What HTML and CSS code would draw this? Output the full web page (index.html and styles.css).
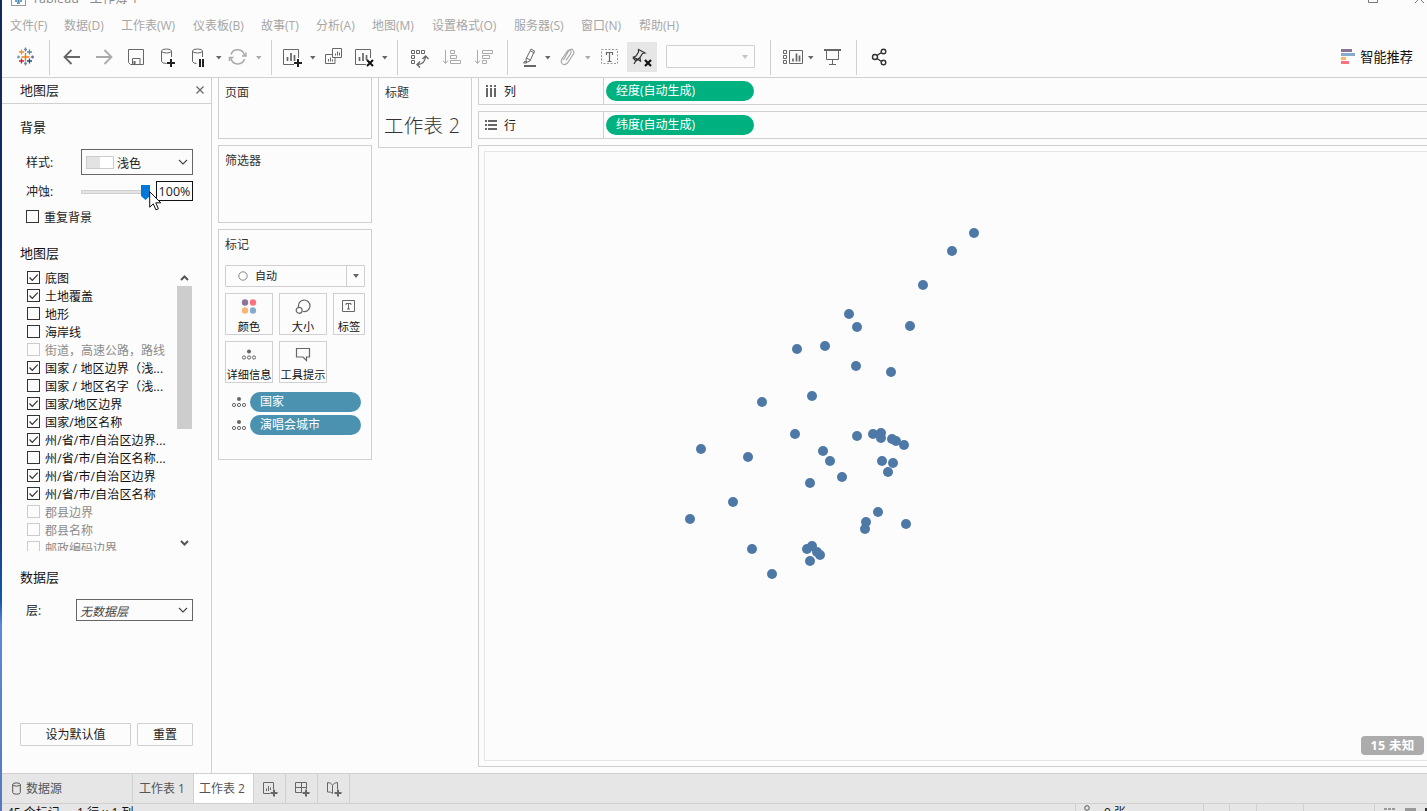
FILE: index.html
```html
<!DOCTYPE html>
<html lang="zh-CN">
<head>
<meta charset="utf-8">
<title>Tableau - 工作簿 1</title>
<link rel="stylesheet" href="styles.css">
</head>
<body>
<svg class="defs" width="0" height="0">
  <defs>
    <symbol id="tick" viewBox="0 0 13 13"><path d="M2.5 6.5l2.8 2.8 5.4-5.6" fill="none" stroke="#333" stroke-width="1.2"/></symbol>
    <symbol id="detail" viewBox="0 0 14 12"><g fill="none" stroke="#666"><circle cx="2" cy="9" r="1.6"/><circle cx="7" cy="9" r="1.6"/><circle cx="12" cy="9" r="1.6"/></g><circle cx="7" cy="3" r="2" fill="#666"/></symbol>
    <symbol id="chev" viewBox="0 0 10 6"><path d="M1 1l4 4 4-4" fill="none" stroke="#444" stroke-width="1.1"/></symbol>
  </defs>
</svg>
<div class="window">
  <header class="titlebar">
    <svg class="app-icon" width="16" height="16"><rect x=".5" y=".5" width="14" height="14" fill="#fff" stroke="#999"/><path d="M7.5 3v9M3 7.500h9" stroke="#3f7fae" stroke-width="2" stroke-dasharray="2 1"/><path d="M4 10h2M9 10h2M6 12h3" stroke="#3f7fae" stroke-width="1.500"/></svg>
    <span class="title">Tableau - 工作簿 1</span>
    <svg class="controls" width="60" height="16"><path d="M1.500 3.500v9h9v-9zM48 4l9 9M57 4l-9 9" fill="none" stroke="#777"/></svg>
  </header>
  <nav class="menu">
    <span>文件(F)</span><span>数据(D)</span><span>工作表(W)</span><span>仪表板(B)</span><span>故事(T)</span><span>分析(A)</span><span>地图(M)</span><span>设置格式(O)</span><span>服务器(S)</span><span>窗口(N)</span><span>帮助(H)</span>
  </nav>
  <div class="toolbar">
    <svg width="47" height="39" viewBox="2 38 47 39"><g fill="none" stroke-width="1.3"><path d="M25.500 53v8M21.500 57h8" stroke="#ee7c1e" stroke-width="1.5"/><path d="M21.500 49.500v5M19 52h5" stroke="#ee8f2d"/><path d="M29.500 49.500v5M27 52h5" stroke="#5b879b"/><path d="M21.500 58.500v5M19 61h5" stroke="#c72037"/><path d="M29.500 58.500v5M27 61h5" stroke="#1f4e86"/><path d="M25.500 47.500v4M24 49.500h3M25.500 61.500v4M24 63.500h3" stroke="#7489a8"/><path d="M18.500 55.500v3M17 57h3" stroke="#6cabb3"/><path d="M32.500 55.500v3M31 57h3" stroke="#75689b"/></g></svg>
    <i class="sep"></i>
    <svg width="68" height="39" viewBox="50 38 68 39" fill="none" stroke-width="1.800"><path d="M80 57H65M71.500 50l-7 7 7 7" stroke="#666"/><path d="M96 57h15M104.500 50l7 7-7 7" stroke="#aaa"/></svg>
    <svg width="34" height="39" viewBox="118 38 34 39" fill="none" stroke="#666"><path d="M128.500 49.500h15v15h-13l-2-2zM132.500 64v-5.500h7.500V64" /><path d="M134.500 61v3" stroke-width="2"/></svg>
    <svg width="73" height="39" viewBox="152 38 73 39" fill="none" stroke="#666"><ellipse cx="166.500" cy="51" rx="5" ry="2"/><path d="M161.500 51v10.500q1 2 5 2M171.500 51v6"/><path d="M171 59v8M167 63h8" stroke="#222" stroke-width="2"/><ellipse cx="197.500" cy="51" rx="5" ry="2"/><path d="M192.500 51v10.500q1 2 4 2M202.500 51v6"/><path d="M200 59v8M203 59v8" stroke="#222" stroke-width="2"/><path d="M216 56h5.500l-2.700 3.500z" fill="#666" stroke="none"/></svg>
    <svg width="46" height="39" viewBox="225 38 46 39" fill="none" stroke="#aaa" stroke-width="1.500"><path d="M231 54.500a7 7 0 0 1 13.500 1M244.500 59a7 7 0 0 1-13.500-.5M229.500 61v-3.500h4M246 52.500v3.500h-4"/><path d="M256 56h5.500l-2.700 3.500z" fill="#aaa" stroke="none"/></svg>
    <i class="sep"></i>
    <svg width="125" height="39" viewBox="272 38 125 39" fill="none" stroke="#666"><path d="M294 64.500h-10.500v-15h15V58"/><path d="M287.500 61v-4M291 61v-8M294.500 61v-6" stroke-width="1.700"/><path d="M298 59v8M294 63h8" stroke="#222" stroke-width="2"/><path d="M310 56h5.500l-2.700 3.500z" fill="#666" stroke="none"/><path d="M332.500 48.500h9v9h-9zM332 54.500h-6.500v9h9.500V58M328.500 61.500v-2.500M330.500 61.500v-4M332.500 61.500v-2M335.500 55.500v-2M337.500 55.500v-4M339.500 55.500v-3"/><path d="M366 64.500h-10.500v-15h15V58"/><path d="M359.500 61v-4M363 61v-8M366.500 60v-5" stroke-width="1.700"/><path d="M367 60l6 6M373 60l-6 6" stroke="#111" stroke-width="2"/><path d="M382 56h5.500l-2.700 3.500z" fill="#666" stroke="none"/></svg>
    <i class="sep"></i>
    <svg width="109" height="39" viewBox="398 38 109 39" fill="none" stroke="#666"><path d="M411.500 50.500h3v3h-3zM416.500 50.500h3v3h-3zM421.500 50.500h3v3h-3zM411.500 55.500h3v3h-3zM411.500 60.500h3v3h-3z"/><path d="M417 64.500q8 0 8.500-8M422.500 59l3-3 3 3M420 61.500l-3 3 3 3" stroke-width="1.300"/><g stroke="#aaa"><path d="M445.500 50v13M443 60.500l2.500 3 2.500-3M450.500 50.500h4v3h-4zM450.500 55.500h6v3h-6zM450.500 60.500h10v3h-10z"/><path d="M477.500 50v13M475 60.500l2.500 3 2.500-3M482.500 50.500h10v3h-10zM482.500 55.500h7v3h-7zM482.500 60.500h4v3h-4z"/></g></svg>
    <i class="sep"></i>
    <svg width="119" height="39" viewBox="508 38 119 39" fill="none" stroke="#666"><path d="M531 49l3.500 2-4.500 10-3.500 1.500-.5-3.500zM526.500 58l3.500 2M530.500 51l4 2M525 61l-1.500 2h3z"/><path d="M524 66h12" stroke-width="2"/><path d="M545 56h5.500l-2.700 3.500z" fill="#666" stroke="none"/><path d="M563.500 60l4.500-8q3-4.500 5-2t-.5 5.500l-5 7.500q-3.500 3-5.500.5t1-6l4.500-6.500q2-2 3.200-.7t-.2 3.500l-4.500 6.500" stroke="#aaa" stroke-width="1.200"/><path d="M585 56h5.500l-2.700 3.500z" fill="#aaa" stroke="none"/><rect x="601.500" y="49.500" width="16" height="14" stroke="#999" stroke-dasharray="2 1.500"/><path d="M606.500 55v-2.500h6V55M609.500 52.500v8.500M607.500 61.500h4" stroke-width="1.200"/></svg>
    <span class="active"><svg width="30" height="30" viewBox="627 42 30 30" fill="none" stroke="#333" stroke-width="1.200"><path d="M638.500 49.500l6.500 3.500-2.500.5-2.500 4 .5 3.500-7-4 2.500-1 2.500-4zM640 57.500l-4 3.500-3-3M636.500 59.500l-2.500 4.500"/><path d="M645 60l6 6M651 60l-6 6" stroke="#111" stroke-width="2.200"/></svg></span>
    <span class="combo"><i class="caret"></i></span>
    <i class="sep"></i>
    <svg width="85" height="39" viewBox="771 38 85 39" fill="none" stroke="#666"><path d="M783.500 50.500h3v3h-3zM783.500 55.500h3v3h-3zM783.500 60.500h3v3h-3zM789.500 50.500h13v13h-13z"/><path d="M793 61.500v-3M796.500 61.500v-8M799.500 61.500v-6" stroke-width="1.700"/><path d="M808 56h5.500l-2.700 3.500z" fill="#666" stroke="none"/><path d="M824 50h17" stroke-width="2"/><path d="M826.500 51v8.500h12V51M832.500 60v4M829 64.500h7"/></svg>
    <i class="sep"></i>
    <svg width="40" height="39" viewBox="857 38 40 39" fill="none" stroke="#333" stroke-width="1.400"><circle cx="875" cy="57" r="2.500"/><circle cx="883.500" cy="51.500" r="2.300"/><circle cx="883.500" cy="62.500" r="2.300"/><path d="M877 55.500l4.500-3M877 58.500l4.500 3"/></svg>
    <div class="showme"><svg width="14" height="16"><path fill="#8b7399" d="M0 0h11v3H0z"/><path fill="#87abcf" d="M0 4h14v3H0z"/><path fill="#fbb55d" d="M0 8h5v3H0z"/><path fill="#fb717d" d="M0 12h8v3H0z"/></svg><span>智能推荐</span></div>
  </div>

  <main class="workspace">
    <aside class="layers">
      <div class="layers-head"><span>地图层</span><svg width="8" height="8"><path d="M.5.5l7 7M7.500.5l-7 7" stroke="#666" stroke-width="1.200"/></svg></div>
      <h3 class="bg-title">背景</h3>
      <div class="field style-field"><label>样式:</label><div class="select"><i class="swatch"></i><span>浅色</span><svg width="10" height="6"><use href="#chev"/></svg></div></div>
      <div class="field wash-field"><label>冲蚀:</label><div class="slider"><i class="track"></i><svg class="thumb" width="9" height="15"><path d="M0 0h9v11l-4.500 4L0 11z" fill="#0078d7"/></svg></div><output>100%</output>
        <svg class="cursor" width="13" height="20"><path d="M.7.7v15.500l3.600-3.400 2.600 6 2.500-1-2.600-6H11.800z" fill="#fff" stroke="#111"/></svg></div>
      <div class="repeat"><i class="box"></i><span>重复背景</span></div>
      <h3 class="list-title">地图层</h3>
      <div class="layer-list">
        <ul>
          <li><i class="box"><svg><use href="#tick"/></svg></i>底图</li>
          <li><i class="box"><svg><use href="#tick"/></svg></i>土地覆盖</li>
          <li><i class="box"></i>地形</li>
          <li><i class="box"></i>海岸线</li>
          <li class="off"><i class="box"></i>街道，高速公路，路线</li>
          <li class="spaced"><i class="box"><svg><use href="#tick"/></svg></i>国家 / 地区边界（浅...</li>
          <li class="spaced"><i class="box"></i>国家 / 地区名字（浅...</li>
          <li class="spaced"><i class="box"><svg><use href="#tick"/></svg></i>国家/地区边界</li>
          <li class="spaced"><i class="box"><svg><use href="#tick"/></svg></i>国家/地区名称</li>
          <li class="spaced"><i class="box"><svg><use href="#tick"/></svg></i>州/省/市/自治区边界...</li>
          <li class="spaced"><i class="box"></i>州/省/市/自治区名称...</li>
          <li class="spaced"><i class="box"><svg><use href="#tick"/></svg></i>州/省/市/自治区边界</li>
          <li class="spaced"><i class="box"><svg><use href="#tick"/></svg></i>州/省/市/自治区名称</li>
          <li class="off"><i class="box"></i>郡县边界</li>
          <li class="off"><i class="box"></i>郡县名称</li>
          <li class="off"><i class="box"></i>邮政编码边界</li>
        </ul>
        <div class="scrollbar">
          <svg width="15" height="17"><path d="M4 11l3.500-3.500L11 11" fill="none" stroke="#555" stroke-width="2"/></svg>
          <i class="scroll-thumb"></i>
          <svg class="down" width="15" height="17"><path d="M4 7l3.500 3.500L11 7" fill="none" stroke="#555" stroke-width="2"/></svg>
        </div>
      </div>
      <h3 class="data-title">数据层</h3>
      <div class="field data-field"><label>层:</label><div class="select"><em>无数据层</em><svg width="10" height="6"><use href="#chev"/></svg></div></div>
      <div class="buttons"><button class="wide">设为默认值</button><button>重置</button></div>
    </aside>

    <section class="cards">
      <div class="card pages">页面</div>
      <div class="card filters">筛选器</div>
      <div class="card marks">
        <div>标记</div>
        <div class="mark-type"><svg width="10" height="10"><circle cx="5" cy="5" r="4.200" fill="none" stroke="#888"/></svg><span>自动</span><b><i class="caret"></i></b></div>
        <div class="mark-grid">
          <div><svg width="16" height="18"><circle cx="4" cy="3.500" r="3.200" fill="#8b7399"/><circle cx="12" cy="3.500" r="3.200" fill="#fb717d"/><circle cx="4" cy="11.500" r="3.200" fill="#fbb577"/><circle cx="12" cy="11.500" r="3.200" fill="#87abcf"/></svg>颜色</div>
          <div><svg width="16" height="18" fill="none" stroke="#666" stroke-width="1.200"><path d="M3.500 8a5.800 5.800 0 1 1 4.500 4.500"/><circle cx="4.200" cy="11.300" r="3"/></svg>大小</div>
          <div><svg width="16" height="18" fill="none" stroke="#666"><path d="M1.500 1.500h12v11h-12zM5 6V4.500h5V6M7.500 4.500V10M6 10h3"/></svg>标签</div>
          <div><svg width="16" height="18"><use href="#detail" x="1" y="1.500" width="14" height="12"/></svg>详细信息</div>
          <div><svg width="16" height="18" fill="none" stroke="#666" stroke-width="1.200"><path d="M1.500 1.500h13v8.500h-3v3.500L8 10H1.500z"/></svg>工具提示</div>
        </div>
        <div class="mark-pill"><svg width="14" height="12"><use href="#detail"/></svg><span>国家</span></div>
        <div class="mark-pill"><svg width="14" height="12"><use href="#detail"/></svg><span>演唱会城市</span></div>
      </div>
    </section>

    <section class="title-card"><div>标题</div><h1>工作表 2</h1></section>

    <section class="sheet">
      <div class="shelf"><div class="shelf-label"><svg width="12" height="12" fill="#666"><path d="M1 0h2v2H1zM5 0h2v2H5zM9 0h2v2H9zM1 3h2v9H1zM5 3h2v9H5zM9 3h2v9H9z"/></svg><span>列</span></div><span class="pill">经度(自动生成)</span></div>
      <div class="shelf"><div class="shelf-label"><svg width="12" height="12" fill="#666"><path d="M0 1h2v2H0zM0 5h2v2H0zM0 9h2v2H0zM3 1h9v2H3zM3 5h9v2H3zM3 9h9v2H3z"/></svg><span>行</span></div><span class="pill">纬度(自动生成)</span></div>
      <div class="view"><div class="map">
        <svg width="942" height="608" viewBox="485 152 942 608" fill="#4e79a7"><circle cx="974" cy="233" r="5"/><circle cx="952" cy="251" r="5"/><circle cx="923" cy="285" r="5"/><circle cx="849" cy="314" r="5"/><circle cx="857" cy="327" r="5"/><circle cx="910" cy="326" r="5"/><circle cx="797" cy="349" r="5"/><circle cx="825" cy="346" r="5"/><circle cx="856" cy="366" r="5"/><circle cx="891" cy="372" r="5"/><circle cx="812" cy="396" r="5"/><circle cx="762" cy="402" r="5"/><circle cx="795" cy="434" r="5"/><circle cx="857" cy="436" r="5"/><circle cx="873" cy="434" r="5"/><circle cx="881" cy="433" r="5"/><circle cx="881" cy="438" r="5"/><circle cx="892" cy="439" r="5"/><circle cx="896" cy="441" r="5"/><circle cx="904" cy="445" r="5"/><circle cx="701" cy="449" r="5"/><circle cx="748" cy="457" r="5"/><circle cx="823" cy="451" r="5"/><circle cx="830" cy="461" r="5"/><circle cx="882" cy="461" r="5"/><circle cx="893" cy="463" r="5"/><circle cx="888" cy="472" r="5"/><circle cx="842" cy="477" r="5"/><circle cx="810" cy="483" r="5"/><circle cx="733" cy="502" r="5"/><circle cx="690" cy="519" r="5"/><circle cx="878" cy="512" r="5"/><circle cx="866" cy="522" r="5"/><circle cx="865" cy="529" r="5"/><circle cx="906" cy="524" r="5"/><circle cx="752" cy="549" r="5"/><circle cx="807" cy="549" r="5"/><circle cx="812" cy="546" r="5"/><circle cx="817" cy="552" r="5"/><circle cx="820" cy="555" r="5"/><circle cx="810" cy="561" r="5"/><circle cx="772" cy="574" r="5"/></svg>
        <span class="unknown">15 未知</span>
      </div></div>
    </section>
  </main>

  <footer class="tabs">
    <div class="source"><svg width="9" height="13" fill="none" stroke="#555"><ellipse cx="4.500" cy="2.500" rx="3.800" ry="1.600"/><path d="M.7 2.500v8q0 1.700 3.800 1.700t3.800-1.700v-8"/></svg>数据源</div>
    <div class="tab">工作表 1</div>
    <div class="tab current">工作表 2</div>
    <div class="new"><svg width="18" height="18" fill="none" stroke="#666"><path d="M9 12.500H2.500v-11h10V8M5.500 10V7.500M7.500 10V5M9.500 9V6.500"/><path d="M13 8.500v7M9.500 12h7" stroke-width="2"/></svg></div>
    <div class="new"><svg width="18" height="18" fill="none" stroke="#666"><path d="M9 11.500H2.500v-10h11V8M2.500 6.500h11M8.500 1.500v10"/><path d="M13 8.500v7M9.500 12h7" stroke-width="2"/></svg></div>
    <div class="new"><svg width="18" height="18" fill="none" stroke="#666"><path d="M8 12.500q-2-2-5.500-1.500v-9.500Q6 1.500 7.500 4q2-2.500 5-2.500V8M7.500 4v8.500"/><path d="M13 8.500v7M9.500 12h7" stroke-width="2"/></svg></div>
  </footer>
  <div class="status">
    <span class="marks-count">45 个标记</span><span class="rows-count">1 行 x 1 列</span>
    <div class="status-right">
      <div class="user"><svg width="8" height="12" fill="none" stroke="#555"><circle cx="4" cy="4" r="2.300"/><path d="M1 12V9q3-3 6 0v3"/></svg><span>0 张</span></div>
      <div></div><div></div><div></div><div></div>
      <div class="modes"><svg width="52" height="8"><path d="M9 4h3v2H9zM13 4h3v2h-3zM17 4h3v2h-3zM30 4h11v4H30z" fill="#999"/><path d="M50 4h2v4h-2z" fill="#333"/></svg></div>
    </div>
  </div>
</div>
</body>
</html>
```
FILE: styles.css
```css
* { box-sizing: border-box; }
body {
  margin: 0;
  width: 1427px;
  height: 811px;
  overflow: hidden;
  background: #fcfcfc;
  color: #222;
  font: 12px/18px "Open Sans", "Noto Sans CJK SC", sans-serif;
}
svg { display: block; flex: none; }
.defs { position: absolute; }
i { font-style: normal; }
ul { list-style: none; margin: 0; padding: 0; }
h1, h3 { margin: 0; font-weight: 400; }
.window {
  display: flex;
  flex-direction: column;
  height: 811px;
  border-style: solid;
  border-image: linear-gradient(#12275f 0, #12306f 60%, #1757a8 74%, #5a8bd6 77%, #5578bd 100%) 1;
  border-width: 0 0 0 2px;
}

/* title, menu and toolbar */
.titlebar { display: flex; height: 14px; padding-left: 9px; flex: none; }
.app-icon { margin-top: -9px; }
.title { margin: -10px 0 0 5px; font-size: 12.5px; line-height: 18px; color: #8a8a8a; white-space: pre; letter-spacing: .1px; }
.controls { margin: -10px 0 0 auto; width: 60px; }
.menu {
  display: grid;
  grid-template-columns: 54px 57px 72px 68px 55px 56px 60px 82px 67px 58px auto;
  height: 24px;
  padding-left: 8px;
  line-height: 24px;
  color: #a6a6a6;
  white-space: nowrap;
  flex: none;
}
.toolbar { display: flex; height: 39px; flex: none; }
.sep { width: 1px; height: 35px; margin-top: 2px; background: #d0d0d0; flex: none; }
.active { height: 30px; margin-top: 4px; background: #e6e6e6; }
.combo {
  display: flex; align-items: center; justify-content: flex-end;
  width: 89px; height: 23px; margin: 7px 15px 0 9px; padding-right: 6px;
  border: 1px solid #d0d0d0; border-radius: 1px;
}
.caret { border: 3.5px solid transparent; border-top: 4px solid #666; border-bottom: 0; }
.combo .caret { border-top-color: #c4c4c4; }
.showme { display: flex; gap: 5px; margin: 11px 14px 0 auto; font-size: 13.2px; line-height: 17px; color: #111; }

/* workspace columns */
.workspace { display: flex; height: 696px; border-top: 1px solid #d0d0d0; flex: none; }
.layers { width: 210px; border-right: 1px solid #d0d0d0; flex: none; }
.layers h3 { height: 24px; padding-left: 18px; font-size: 13px; line-height: 23px; color: #111; }
.layers-head {
  display: flex; justify-content: space-between;
  height: 26px; padding: 0 7px 0 18px;
  border-bottom: 1px solid #d0d0d0;
  font-size: 13px; line-height: 24px;
}
.layers-head svg { margin-top: 8px; }
.layers .bg-title { margin-top: 12px; }
.field { display: flex; padding: 0 18px 0 24px; position: relative; }
.field label { width: 55px; }
.select { display: flex; align-items: center; flex: 1; padding: 0 4px; border: 1px solid #666; }
.select svg { margin-left: auto; }
.select span, .select em { padding-top: 2px; }
.style-field { height: 26px; margin-top: 9px; line-height: 27px; }
.swatch { width: 28px; height: 13px; margin-right: 3px; border: 1px solid #ccc; background: linear-gradient(90deg, #e3e3e3 50%, #fff 50%); }
.wash-field { height: 20px; margin-top: 6px; line-height: 22px; }
.slider { display: flex; align-items: center; width: 75px; }
.track { width: 60px; height: 4px; background: #e3e3e3; border: 1px solid #d0d0d0; border-right: 0; margin-top: 2px; }
.thumb { margin-top: 3px; }
output { width: 37px; border: 1px solid #111; font-size: 12.5px; line-height: 19px; text-align: center; color: #222; white-space: nowrap; }
.cursor { position: absolute; left: 147px; top: 10px; }
.repeat { display: flex; gap: 5px; height: 18px; margin-top: 7px; padding-left: 24px; line-height: 20px; }
.box { width: 13px; height: 13px; border: 1px solid #333; flex: none; margin-top: 2px; }
.box svg { width: 13px; height: 13px; margin: -1px; }
.layers .list-title { margin-top: 16px; }
.layer-list { display: flex; justify-content: space-between; height: 282px; margin-top: 3px; padding: 0 19px 0 25px; overflow: hidden; }
.layer-list li { display: flex; gap: 5px; height: 18px; line-height: 20px; white-space: nowrap; color: #111; }
.layer-list .spaced { letter-spacing: .15px; }
.layer-list .off { color: #8c8c8c; }
.off .box { border-color: #ccc; }
.scrollbar { display: flex; flex-direction: column; width: 15px; }
.scroll-thumb { height: 143px; background: #cdcdcd; }
.scrollbar .down { margin-top: auto; }
.layers .data-title { margin-top: 15px; }
.data-field { height: 22px; margin-top: 9px; line-height: 23px; }
.data-field label { width: 50px; }
.data-field .select { padding-left: 3px; }
.data-field em { color: #444; }
.buttons { display: flex; gap: 6px; margin-top: 102px; padding-left: 18px; }
button { width: 56px; height: 23px; padding: 0; border: 1px solid #d0d0d0; border-radius: 1px; background: none; color: #222; font: inherit; line-height: 20px; }
.wide { width: 111px; }

.cards { display: flex; flex-direction: column; gap: 6px; width: 154px; margin: -1px 0 0 6px; flex: none; }
.card, .title-card { border: 1px solid #d0d0d0; padding: 6px 6px 0; color: #333; }
.pages { height: 62px; }
.filters { height: 78px; }
.marks { height: 231px; }
.mark-type { display: flex; align-items: center; height: 22px; margin-top: 11px; padding-left: 12px; border: 1px solid #d0d0d0; border-radius: 1px; font-size: 11px; color: #222; }
.mark-type span { margin-left: 7px; }
.mark-type b { display: flex; align-items: center; justify-content: center; width: 18px; height: 20px; margin-left: auto; border-left: 1px solid #d0d0d0; }
.mark-grid { display: grid; grid-template-columns: 48px 48px 32px; gap: 6px; margin-top: 6px; }
.mark-grid > div { display: flex; flex-direction: column; align-items: center; height: 42px; padding-top: 5px; border: 1px solid #d0d0d0; font-size: 11.2px; line-height: 19px; white-space: nowrap; color: #111; }
.mark-pill { display: flex; align-items: center; gap: 11px; height: 20px; margin-top: 9px; padding-left: 7px; }
.mark-pill span { width: 111px; height: 20px; margin-left: -7px; padding-left: 10px; line-height: 19px; border-radius: 10px; background: #4a92b0; color: #fff; flex: none; }
.mark-pill + .mark-pill { margin-top: 3px; }

.title-card { width: 94px; height: 71px; margin: -1px 0 0 6px; flex: none; }
.title-card h1 { margin: 10px 0 0 -1px; font: 300 19.500px/28px "Open Sans", "Noto Sans CJK SC", sans-serif; letter-spacing: .3px; white-space: nowrap; }

.sheet { display: flex; flex-direction: column; gap: 6px; margin: -1px 0 6px 6px; flex: 1; min-width: 0; }
.shelf { display: flex; align-items: center; height: 28px; border: 1px solid #d0d0d0; border-right: 0; flex: none; }
.shelf-label { display: flex; align-items: center; gap: 7px; width: 125px; height: 26px; padding-left: 6px; border-right: 1px solid #d0d0d0; }
.shelf-label span { padding-top: 1px; }
.pill { width: 148px; height: 20px; margin-left: 2px; padding-left: 10px; border-radius: 10px; background: #00b180; color: #fff; line-height: 20px; }
.view { flex: 1; padding: 5px 0 5px 5px; border: 1px solid #d0d0d0; border-right: 0; min-height: 0; }
.map { position: relative; height: 100%; border: 1px solid #e6e6e6; border-right: 0; }
.unknown { position: absolute; right: 3px; bottom: 5px; width: 63px; height: 19px; border-radius: 4px; background: #acacac; color: #fff; font-size: 12.5px; font-weight: 700; line-height: 19px; text-align: center; letter-spacing: .3px; }

/* sheet tabs and status */
.tabs { display: flex; height: 31px; border: 1px solid #d0d0d0; border-left: 0; border-right: 0; background: #e6e6e6; color: #555; line-height: 29px; flex: none; }
.tabs > div { border-right: 1px solid #d0d0d0; white-space: nowrap; }
.source { display: flex; align-items: center; gap: 5px; width: 131px; padding-left: 10px; }
.tabs .tab { width: 61px; padding-left: 6px; }
.tabs .current { width: 60px; padding-left: 5px; background: #fff; }
.new { display: flex; align-items: center; width: 32px; padding: 3px 0 0 7px; }
.status { display: flex; height: 7px; padding-left: 5px; background: #e6e6e6; color: #111; overflow: hidden; flex: none; white-space: nowrap; }
.marks-count { width: 70px; }
.status-right { display: grid; grid-template-columns: 128px 26px 27px 47px 71px 53px; margin-left: auto; height: 7px; }
.status-right > div { border-left: 1px solid #d0d0d0; }
.user { display: flex; gap: 13px; padding-left: 7px; }
```
